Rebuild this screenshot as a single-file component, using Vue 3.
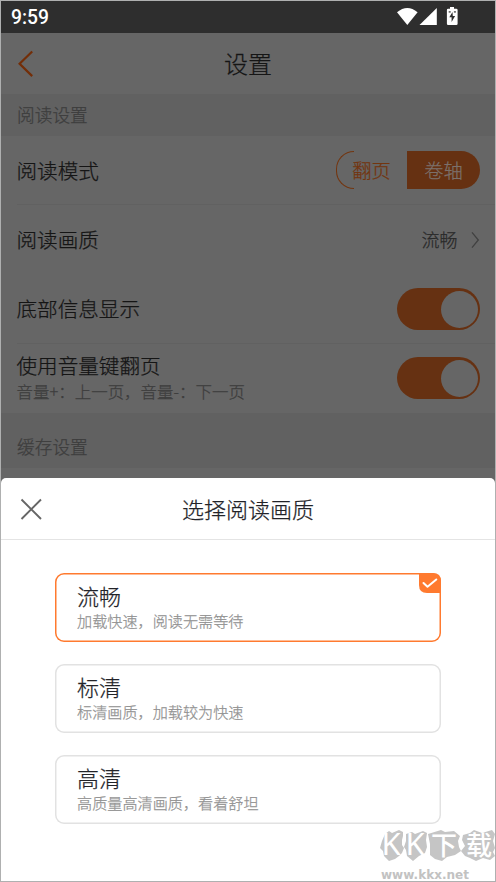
<script setup>
const qualities = [
  { name: '流畅', note: '加载快速，阅读无需等待' },
  { name: '标清', note: '标清画质，加载较为快速' },
  { name: '高清', note: '高质量高清画质，看着舒坦' },
]
const selected = '流畅'
</script>

<template>
  <div class="screen">
    <header class="status">
      <span class="time">9:59</span>
      <svg class="status-icons" width="62" height="20" viewBox="0 0 62 20">
        <path d="M0 5.300Q10.300-3.200 20.600 5.300L10.300 18Z" fill="#fff" />
        <path d="M22.500 18L39.800 1V18Z" fill="#fff" />
        <path d="M53 0h4v1.700h2.300q1.300 0 1.300 1.300v13.700q0 1.300-1.300 1.300h-8.100q-1.300 0-1.300-1.300V3q0-1.300 1.300-1.300H53Z" fill="#fff" />
        <path d="M55.500 5l-3.200 5.300h2.300v4.700l3.500-6h-2.300Z" fill="#2e2e2e" />
        <path d="M51.700 4h2v1.800h-2zM56.900 4h2v1.800h-2z" fill="#707070" />
      </svg>
    </header>

    <nav class="nav">
      <svg class="back" width="18" height="28" viewBox="0 0 18 28">
        <path d="M16.200 1.500L3.600 13.800L16.200 26.100" fill="none" stroke="#732e08" stroke-width="2.200" />
      </svg>
      <h1>设置</h1>
    </nav>

    <div class="section first">阅读设置</div>
    <div class="row line">
      <span class="label">阅读模式</span>
      <div class="segment">
        <span class="seg-left">翻页</span>
        <span class="seg-right">卷轴</span>
      </div>
    </div>
    <div class="row">
      <span class="label">阅读画质</span>
      <span class="value"><span>流畅</span>
        <svg width="10" height="20" viewBox="0 0 10 20">
          <path d="M2 2.300L8.300 10L2 17.700" fill="none" stroke="#414141" stroke-width="1.300" />
        </svg>
      </span>
    </div>
    <div class="row line">
      <span class="label">底部信息显示</span>
      <span class="toggle"><i></i></span>
    </div>
    <div class="row">
      <div class="double">
        <span class="label">使用音量键翻页</span>
        <span class="hint">音量+：上一页，音量-：下一页</span>
      </div>
      <span class="toggle"><i></i></span>
    </div>
    <div class="section second">缓存设置</div>
    <div class="remainder"></div>

    <section class="sheet">
      <header class="sheet-head">
        <svg class="close" width="22" height="22" viewBox="0 0 22 22">
          <path d="M1.500 1.500L21 21M21 1.500L1.500 21" fill="none" stroke="#666" stroke-width="1.900" />
        </svg>
        <h2>选择阅读画质</h2>
      </header>
      <div class="cards">
        <div v-for="q in qualities" :key="q.name" class="card" :class="{ active: q.name === selected }">
          <strong>{{ q.name }}</strong>
          <span>{{ q.note }}</span>
          <svg v-if="q.name === selected" class="tick" width="22" height="20" viewBox="0 0 22 20">
            <path d="M0 0H14Q22 0 22 8V20H8Q0 20 0 12Z" fill="#ff7a2f" />
            <path d="M4.500 10L8.500 13.800L17.300 6.500" fill="none" stroke="#fff" stroke-width="2" stroke-linecap="round" stroke-linejoin="round" />
          </svg>
        </div>
      </div>
    </section>

    <svg class="mark" width="115" height="55" viewBox="0 0 115 55">
      <g fill="#c5c5c5">
        <path d="M5 7L9 4L12 6L19 3L23 5L23 9L22 13L22 18L24 21L22 26L19 29L15 32L9 34L4 29L3 24L0 21L2 14Z" />
        <path d="M26 7L32 5L35 7L43 4L47 6L46 13L47 20L45 26L39 29L33 34L27 29L26 23L24 20L26 14Z" />
        <path d="M48 7L61 3L65 5L74 4L80 9L78 14L79 20L81 24L75 28L67 30L62 34L55 32L50 28L50 17Z" />
        <path d="M83 8L90 6L94 3L102 6L112 3L115 7L113 14L115 21L113 25L115 29L110 33L103 31L96 34L90 31L85 29L81 24L85 19L82 13Z" />
      </g>
      <g class="mark-name" fill="#fff">
        <text x="1.500" y="28">K</text>
        <text x="25.500" y="28">K</text>
        <text x="51" y="28" class="han">下</text>
        <text x="86" y="28" class="han">载</text>
      </g>
      <text x="1" y="52" class="mark-url" fill="#c2c2c2" textLength="88" lengthAdjust="spacingAndGlyphs">www.kkx.net</text>
    </svg>
  </div>
</template>

<style>
body {
  margin: 0;
  overflow: hidden;
}
</style>

<style scoped>
.screen {
  position: relative;
  box-sizing: border-box;
  width: 496px;
  height: 882px;
  border: 1px solid #afb0b0;
  overflow: hidden;
  display: flex;
  flex-direction: column;
  background: #666;
  color: #151515;
  font-family: "Noto Sans CJK SC", sans-serif;
  font-weight: 300;
  -webkit-text-stroke-width: 0.250px;
}
.status {
  height: 32px;
  flex: none;
  box-sizing: border-box;
  padding: 0 36px 0 10px;
  display: flex;
  align-items: center;
  justify-content: space-between;
  background: #2e2e2e;
  -webkit-text-stroke-width: 0;
}
.time {
  color: #fff;
  margin-top: 2px;
  font: 500 19.300px/32px Roboto, sans-serif;
}
.status-icons {
  margin-top: -1px;
}
.nav {
  height: 61px;
  flex: none;
  display: grid;
  grid-template-columns: 60px 1fr 60px;
  align-items: center;
}
.back {
  margin-left: 15px;
}
h1 {
  margin: -2px 0 0;
  text-align: center;
  font-size: 24px;
  font-weight: 300;
  line-height: 36px;
}
.section {
  flex: none;
  box-sizing: border-box;
  padding-left: 16px;
  background: #616161;
  color: #3d3d3d;
  font-size: 17.700px;
}
.first {
  height: 42px;
  line-height: 40px;
}
.second {
  height: 55px;
  padding-top: 18px;
  line-height: 30px;
}
.row {
  height: 69.250px;
  flex: none;
  box-sizing: border-box;
  position: relative;
  padding: 0 15px 0 16px;
  display: flex;
  align-items: center;
  justify-content: space-between;
}
.line::after {
  content: "";
  position: absolute;
  left: 16px;
  right: 0;
  bottom: 0;
  height: 1px;
  background: #616161;
}
.label {
  font-size: 20.600px;
  line-height: 28px;
  margin: -2px 0 0 -0.500px;
}
.double {
  display: flex;
  flex-direction: column;
}
.hint {
  color: #3d3d3d;
  font-size: 16.480px;
  line-height: 24px;
  margin-left: -0.500px;
}
.segment {
  width: 144px;
  height: 38px;
  margin-top: -1px;
  display: flex;
  font-size: 19.300px;
  line-height: 38px;
  text-align: center;
}
.seg-left {
  position: relative;
  width: 71px;
  color: #73350f;
}
.seg-left::before {
  content: "";
  position: absolute;
  inset: 0 auto 0 0;
  width: 18px;
  box-sizing: border-box;
  border: 1px solid #73350f;
  border-right: 0;
  border-radius: 19px 0 0 19px / 19px 0 0 19px;
}
.seg-right {
  width: 73px;
  color: #7b706b;
  background: #663112;
  border-radius: 0 19px 19px 0;
}
.value {
  display: flex;
  align-items: center;
  gap: 12.500px;
  color: #292929;
  font-size: 18px;
}
.value span {
  margin-top: -2px;
}
.toggle {
  width: 83px;
  height: 42px;
  box-sizing: border-box;
  padding: 2.500px;
  border-radius: 21px;
  background: #663112;
  display: flex;
  justify-content: flex-end;
}
.toggle i {
  width: 37px;
  height: 37px;
  border-radius: 50%;
  background: #666;
}
.remainder {
  height: 10px;
  flex: none;
}
.sheet {
  flex: 1;
  background: #fff;
  color: #222328;
  border-radius: 5px 5px 0 0;
}
.sheet-head {
  height: 62px;
  box-sizing: border-box;
  border-bottom: 1px solid #e4e4e4;
  display: grid;
  grid-template-columns: 60px 1fr 60px;
  align-items: center;
}
.close {
  margin-left: 19px;
}
h2 {
  margin: -2px 0 0;
  text-align: center;
  font-size: 22px;
  font-weight: 300;
  line-height: 32px;
}
.cards {
  padding: 33px 54px 0;
  display: flex;
  flex-direction: column;
  gap: 22px;
}
.card {
  position: relative;
  height: 69px;
  box-sizing: border-box;
  box-shadow: inset 0 0 0 1.500px #e2e2e2;
  border-radius: 9px;
  padding: 8px 0 0 22px;
  display: flex;
  flex-direction: column;
}
.card.active {
  box-shadow: inset 0 0 0 1.500px #ff7a2f;
}
.card strong {
  font-size: 22px;
  font-weight: 300;
  line-height: 28px;
}
.card span {
  color: #929292;
  font-size: 15.130px;
  line-height: 22px;
}
.tick {
  position: absolute;
  top: 0;
  right: 0;
}
.mark {
  position: absolute;
  left: 379px;
  top: 826px;
  -webkit-text-stroke-width: 0;
}
.mark-name text {
  font: 400 31px "Noto Sans", sans-serif;
}
.mark-name .han {
  font: 500 26px "Noto Sans CJK SC", sans-serif;
}
.mark-url {
  font: 700 12px "DejaVu Sans", sans-serif;
}
</style>
